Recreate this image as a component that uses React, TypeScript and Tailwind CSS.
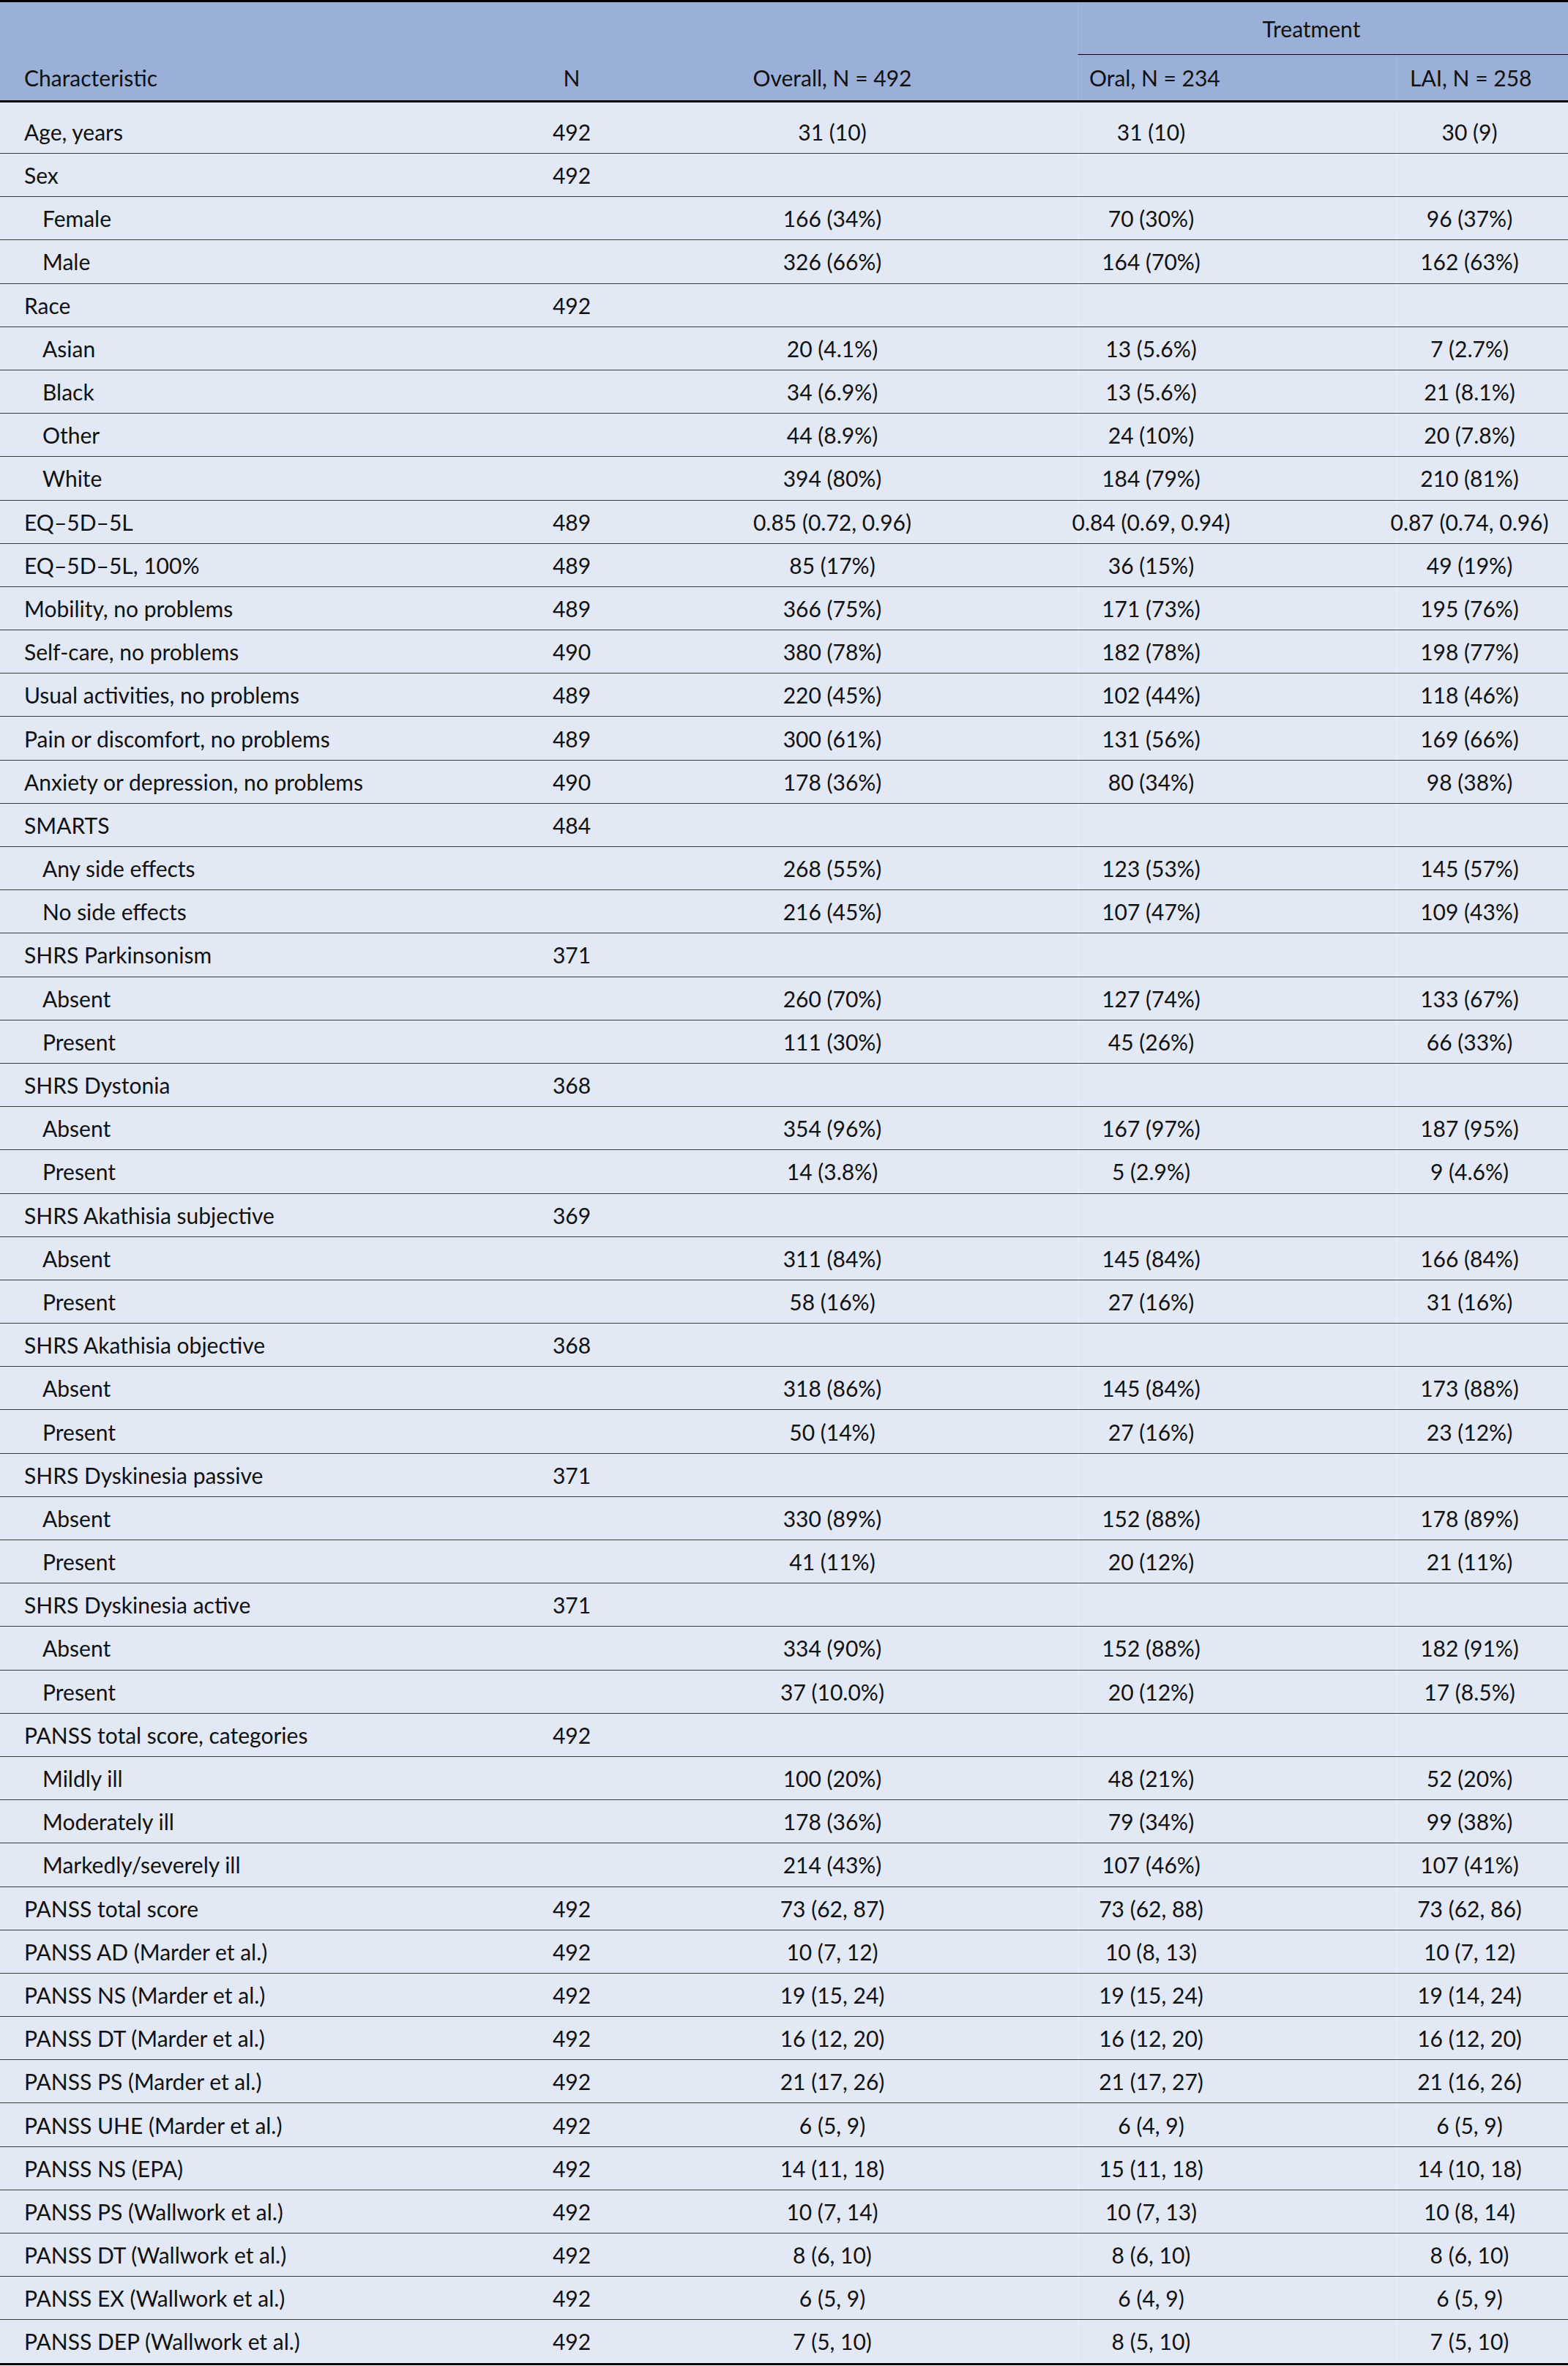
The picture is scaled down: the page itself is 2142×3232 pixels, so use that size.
import React from 'react';

type Row = [string, number, string?, string?, string?, string?];

const rows: Row[] = [
  ['Age, years', 0, '492', '31 (10)', '31 (10)', '30 (9)'],
  ['Sex', 0, '492'],
  ['Female', 1, '', '166 (34%)', '70 (30%)', '96 (37%)'],
  ['Male', 1, '', '326 (66%)', '164 (70%)', '162 (63%)'],
  ['Race', 0, '492'],
  ['Asian', 1, '', '20 (4.1%)', '13 (5.6%)', '7 (2.7%)'],
  ['Black', 1, '', '34 (6.9%)', '13 (5.6%)', '21 (8.1%)'],
  ['Other', 1, '', '44 (8.9%)', '24 (10%)', '20 (7.8%)'],
  ['White', 1, '', '394 (80%)', '184 (79%)', '210 (81%)'],
  ['EQ–5D–5L', 0, '489', '0.85 (0.72, 0.96)', '0.84 (0.69, 0.94)', '0.87 (0.74, 0.96)'],
  ['EQ–5D–5L, 100%', 0, '489', '85 (17%)', '36 (15%)', '49 (19%)'],
  ['Mobility, no problems', 0, '489', '366 (75%)', '171 (73%)', '195 (76%)'],
  ['Self-care, no problems', 0, '490', '380 (78%)', '182 (78%)', '198 (77%)'],
  ['Usual activities, no problems', 0, '489', '220 (45%)', '102 (44%)', '118 (46%)'],
  ['Pain or discomfort, no problems', 0, '489', '300 (61%)', '131 (56%)', '169 (66%)'],
  ['Anxiety or depression, no problems', 0, '490', '178 (36%)', '80 (34%)', '98 (38%)'],
  ['SMARTS', 0, '484'],
  ['Any side effects', 1, '', '268 (55%)', '123 (53%)', '145 (57%)'],
  ['No side effects', 1, '', '216 (45%)', '107 (47%)', '109 (43%)'],
  ['SHRS Parkinsonism', 0, '371'],
  ['Absent', 1, '', '260 (70%)', '127 (74%)', '133 (67%)'],
  ['Present', 1, '', '111 (30%)', '45 (26%)', '66 (33%)'],
  ['SHRS Dystonia', 0, '368'],
  ['Absent', 1, '', '354 (96%)', '167 (97%)', '187 (95%)'],
  ['Present', 1, '', '14 (3.8%)', '5 (2.9%)', '9 (4.6%)'],
  ['SHRS Akathisia subjective', 0, '369'],
  ['Absent', 1, '', '311 (84%)', '145 (84%)', '166 (84%)'],
  ['Present', 1, '', '58 (16%)', '27 (16%)', '31 (16%)'],
  ['SHRS Akathisia objective', 0, '368'],
  ['Absent', 1, '', '318 (86%)', '145 (84%)', '173 (88%)'],
  ['Present', 1, '', '50 (14%)', '27 (16%)', '23 (12%)'],
  ['SHRS Dyskinesia passive', 0, '371'],
  ['Absent', 1, '', '330 (89%)', '152 (88%)', '178 (89%)'],
  ['Present', 1, '', '41 (11%)', '20 (12%)', '21 (11%)'],
  ['SHRS Dyskinesia active', 0, '371'],
  ['Absent', 1, '', '334 (90%)', '152 (88%)', '182 (91%)'],
  ['Present', 1, '', '37 (10.0%)', '20 (12%)', '17 (8.5%)'],
  ['PANSS total score, categories', 0, '492'],
  ['Mildly ill', 1, '', '100 (20%)', '48 (21%)', '52 (20%)'],
  ['Moderately ill', 1, '', '178 (36%)', '79 (34%)', '99 (38%)'],
  ['Markedly/severely ill', 1, '', '214 (43%)', '107 (46%)', '107 (41%)'],
  ['PANSS total score', 0, '492', '73 (62, 87)', '73 (62, 88)', '73 (62, 86)'],
  ['PANSS AD (Marder et al.)', 0, '492', '10 (7, 12)', '10 (8, 13)', '10 (7, 12)'],
  ['PANSS NS (Marder et al.)', 0, '492', '19 (15, 24)', '19 (15, 24)', '19 (14, 24)'],
  ['PANSS DT (Marder et al.)', 0, '492', '16 (12, 20)', '16 (12, 20)', '16 (12, 20)'],
  ['PANSS PS (Marder et al.)', 0, '492', '21 (17, 26)', '21 (17, 27)', '21 (16, 26)'],
  ['PANSS UHE (Marder et al.)', 0, '492', '6 (5, 9)', '6 (4, 9)', '6 (5, 9)'],
  ['PANSS NS (EPA)', 0, '492', '14 (11, 18)', '15 (11, 18)', '14 (10, 18)'],
  ['PANSS PS (Wallwork et al.)', 0, '492', '10 (7, 14)', '10 (7, 13)', '10 (8, 14)'],
  ['PANSS DT (Wallwork et al.)', 0, '492', '8 (6, 10)', '8 (6, 10)', '8 (6, 10)'],
  ['PANSS EX (Wallwork et al.)', 0, '492', '6 (5, 9)', '6 (4, 9)', '6 (5, 9)'],
  ['PANSS DEP (Wallwork et al.)', 0, '492', '7 (5, 10)', '8 (5, 10)', '7 (5, 10)'],
];

const cols = 'grid grid-cols-[700px_162px_610px_435px_235px]';

const TableRow = ({ row, first, last }: { row: Row; first: boolean; last: boolean }) => {
  const [label, indent, n = '', overall = '', oral = '', lai = ''] = row;
  const height = first ? 'h-[70px] pt-[10px]' : last ? 'h-[62px] pb-[2px]' : 'h-[59.2px]';
  const border = last ? 'border-b-[3px] border-black' : 'border-b border-[#3c3c3c]';
  return (
    <div className={`${cols} ${height} ${border} items-center whitespace-nowrap`}>
      <div className={indent ? 'pl-[58px]' : 'pl-[33px]'}>{label}</div>
      <div className="text-center">{n}</div>
      <div className="text-center pr-[60px]">{overall}</div>
      <div className="self-stretch flex items-center justify-center pr-[235px] border-l border-[#e9eef8]">
        <span className="whitespace-nowrap">{oral}</span>
      </div>
      <div className="self-stretch flex items-center justify-center pr-[35px] border-l border-[#e9eef8]">
        <span className="whitespace-nowrap">{lai}</span>
      </div>
    </div>
  );
};

export default function App() {
  return (
    <div
      className="w-[2142px] bg-white text-[30px] leading-none text-[#111]"
      style={{ fontFamily: 'Lato, "Open Sans", sans-serif' }}
    >
      <div className="bg-[#9ab0d8] border-t-[3px] border-black">
        <div className={`${cols} h-[72px]`}>
          <div className="col-span-3" />
          <div className="col-span-2 flex items-center justify-center pr-[32px] border-l border-[#a5b9de] border-b-[1.5px] border-b-black">
            Treatment
          </div>
        </div>
        <div className={`${cols} h-[65px] border-b-[3px] border-black items-center whitespace-nowrap`}>
          <div className="pl-[33px]">Characteristic</div>
          <div className="text-center">N</div>
          <div className="text-center pr-[60px]">Overall, N = 492</div>
          <div className="self-stretch flex items-center pl-[15px] border-l border-[#a5b9de]">Oral, N = 234</div>
          <div className="self-stretch flex items-center pl-[18px] border-l border-[#a5b9de]">LAI, N = 258</div>
        </div>
      </div>
      <div className="bg-[#e2e8f4]">
        {rows.map((row, i) => (
          <TableRow key={i} row={row} first={i === 0} last={i === rows.length - 1} />
        ))}
      </div>
    </div>
  );
}
